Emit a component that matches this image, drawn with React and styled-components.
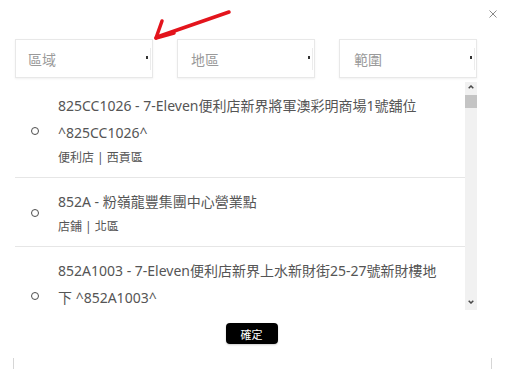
import React, { useLayoutEffect, useRef, useState } from "react";
import styled, { createGlobalStyle } from "styled-components";

const GlobalStyle = createGlobalStyle`
  html, body { margin: 0; padding: 0; background: #fff; }
  body { font-family: "Noto Sans", "Noto Sans CJK TC", sans-serif; }
`;

const Modal = styled.div`
  position: relative;
  width: 505px;
  height: 369px;
  overflow: hidden;
  background: #fff;
`;

const Body = styled.div`
  padding: 39px 28px 0 15px;
`;

const CloseButton = styled.button`
  position: absolute;
  top: 9px;
  right: 7px;
  width: 10px;
  height: 10px;
  padding: 0;
  border: 0;
  background: transparent;
  display: flex;
  align-items: center;
  justify-content: center;
`;

const Annotation = styled.svg`
  position: absolute;
  left: 0;
  top: 0;
  pointer-events: none;
`;

const Filters = styled.div`
  display: grid;
  grid-template-columns: repeat(3, 1fr);
  gap: 24px;
`;

const SelectBox = styled.div`
  height: 37px;
  border: 1px solid #e8e8e8;
  box-shadow: 0 1px 2px rgba(0, 0, 0, 0.06);
  display: flex;
  align-items: center;
  padding-left: ${(p) => p.$indent}px;
  padding-right: 1px;
  font-size: 14px;
  color: #9a9a9a;
  font-family: "Noto Sans CJK TC", sans-serif;
`;

const SelectLabel = styled.span`
  flex: 1;
`;

const Caret = styled.span`
  width: 2px;
  height: 3px;
  background: #333;
  margin-right: 2px;
  margin-top: -2px;
`;

const CaretRule = styled.span`
  width: 1px;
  height: 22px;
  background: #ececec;
`;

const ListFrame = styled.div`
  margin-top: 4px;
  height: 228px;
  display: flex;
`;

const List = styled.div`
  flex: 1;
  min-width: 0;
  overflow-y: auto;
  scrollbar-width: none;
  &::-webkit-scrollbar {
    display: none;
  }
`;

const ScrollBar = styled.div`
  flex: none;
  width: 12px;
  display: flex;
  flex-direction: column;
  background: #f1f1f1;
`;

const ScrollButton = styled.div`
  flex: none;
  height: 12px;
  display: flex;
  align-items: ${(p) => (p.$down ? "flex-start" : "flex-end")};
  justify-content: center;
  padding: ${(p) => (p.$down ? "2px 0 0" : "0 0 5px")};
  box-sizing: border-box;
`;

const ScrollTrack = styled.div`
  flex: 1;
  position: relative;
`;

const ScrollThumb = styled.div`
  position: absolute;
  left: 0;
  right: 0;
  background: #c4c4c4;
`;

const Item = styled.label`
  display: flex;
  align-items: center;
  padding: 10px 20px 8px 16px;
  border-bottom: 1px solid #e6e6e6;
  color: #555;
`;

const Radio = styled.span`
  flex: none;
  width: 8px;
  height: 8px;
  box-sizing: border-box;
  border: 1.5px solid #4d4d4d;
  border-radius: 50%;
  margin-right: 19px;
`;

const ItemText = styled.div`
  flex: 1;
  min-width: 0;
`;

const Title = styled.div`
  font-size: 14px;
  line-height: 27px;
  color: #555;
`;

const Meta = styled.div`
  font-size: 12px;
  line-height: 23px;
  color: #555;
`;

const Footer = styled.div`
  display: flex;
  justify-content: center;
  margin-top: 13px;
`;

const ConfirmButton = styled.button`
  width: 52px;
  height: 21px;
  border: 0;
  border-radius: 4px;
  background: #000;
  color: #fff;
  font-size: 11px;
  font-family: "Noto Sans CJK TC", sans-serif;
  padding: 0;
  margin-left: -2px;
  box-shadow: 0 1px 2px rgba(0, 0, 0, 0.2);
`;

const LowerPanel = styled.div`
  margin: 14px 13px 0 13px;
  height: 30px;
  border-left: 1px solid #d6d6d6;
  border-right: 1px solid #d6d6d6;
`;

const visible = [
  {
    title: "825CC1026 - 7-Eleven便利店新界將軍澳彩明商場1號舖位 ^825CC1026^",
    meta: "便利店 | 西貢區",
  },
  { title: "852A - 粉嶺龍豐集團中心營業點", meta: "店鋪 | 北區" },
  {
    title: "852A1003 - 7-Eleven便利店新界上水新財街25-27號新財樓地下 ^852A1003^",
    meta: "便利店 | 北區",
  },
];

const districts = ["北區", "大埔區", "沙田區", "西貢區", "荃灣區", "屯門區", "元朗區", "葵青區", "離島區"];
const streets = ["新豐路", "龍琛路", "彩明街", "石門路", "大河道", "青山公路", "教育路", "興芳路", "梅窩碼頭路"];
const extra = Array.from({ length: 44 }, (_, i) => {
  const d = districts[i % districts.length];
  const code = `852A${1004 + i}`;
  return {
    title: `${code} - 7-Eleven便利店新界${streets[i % streets.length]}${10 + i}號地下 ^${code}^`,
    meta: `便利店 | ${d}`,
  };
});
const stores = [...visible, ...extra];

const filters = [
  { label: "區域", indent: 12 },
  { label: "地區", indent: 13 },
  { label: "範圍", indent: 14 },
];

const Chevron = ({ down }) => (
  <svg width="6" height="4" viewBox="0 0 6 4">
    <path
      d={down ? "M0.7 0.7 L3 3 L5.3 0.7" : "M0.7 3.3 L3 1 L5.3 3.3"}
      fill="none"
      stroke="#4a4a4a"
      strokeWidth="1.5"
    />
  </svg>
);

export default function App() {
  const listRef = useRef(null);
  const trackRef = useRef(null);
  const [thumb, setThumb] = useState({ top: 0, height: 11 });

  const measure = () => {
    const el = listRef.current;
    const tr = trackRef.current;
    if (!el || !tr) return;
    const track = tr.clientHeight;
    const h = Math.max(10, (track * el.clientHeight) / el.scrollHeight);
    const maxScroll = el.scrollHeight - el.clientHeight || 1;
    const top = ((track - h) * el.scrollTop) / maxScroll;
    setThumb({ top, height: h });
  };

  useLayoutEffect(measure, []);

  return (
    <>
      <GlobalStyle />
      <Modal>
        <CloseButton aria-label="close">
          <svg width="8" height="8" viewBox="0 0 8 8">
            <path d="M0.5 0.5 L7.5 7.5 M7.5 0.5 L0.5 7.5" stroke="#8a8a8a" strokeWidth="1" />
          </svg>
        </CloseButton>
        <Body>
          <Filters>
            {filters.map((f) => (
              <SelectBox key={f.label} $indent={f.indent}>
                <SelectLabel>{f.label}</SelectLabel>
                <Caret />
                <CaretRule />
              </SelectBox>
            ))}
          </Filters>
          <ListFrame>
            <List ref={listRef} onScroll={measure}>
              {stores.map((s, i) => (
                <Item key={i}>
                  <Radio />
                  <ItemText>
                    <Title>{s.title}</Title>
                    <Meta>{s.meta}</Meta>
                  </ItemText>
                </Item>
              ))}
            </List>
            <ScrollBar>
              <ScrollButton>
                <Chevron />
              </ScrollButton>
              <ScrollTrack ref={trackRef}>
                <ScrollThumb style={{ top: thumb.top + 1, height: thumb.height }} />
              </ScrollTrack>
              <ScrollButton $down>
                <Chevron down />
              </ScrollButton>
            </ScrollBar>
          </ListFrame>
        </Body>
        <Footer>
          <ConfirmButton>確定</ConfirmButton>
        </Footer>
        <LowerPanel />
        <Annotation width="505" height="60" viewBox="0 0 505 60">
          <g stroke="#e3141c" strokeWidth="3.5" strokeLinecap="round" fill="none">
            <path d="M229 12 L157 37" />
            <path d="M156 38 L162 21" />
            <path d="M156 38 L174 33" />
          </g>
        </Annotation>
      </Modal>
    </>
  );
}
